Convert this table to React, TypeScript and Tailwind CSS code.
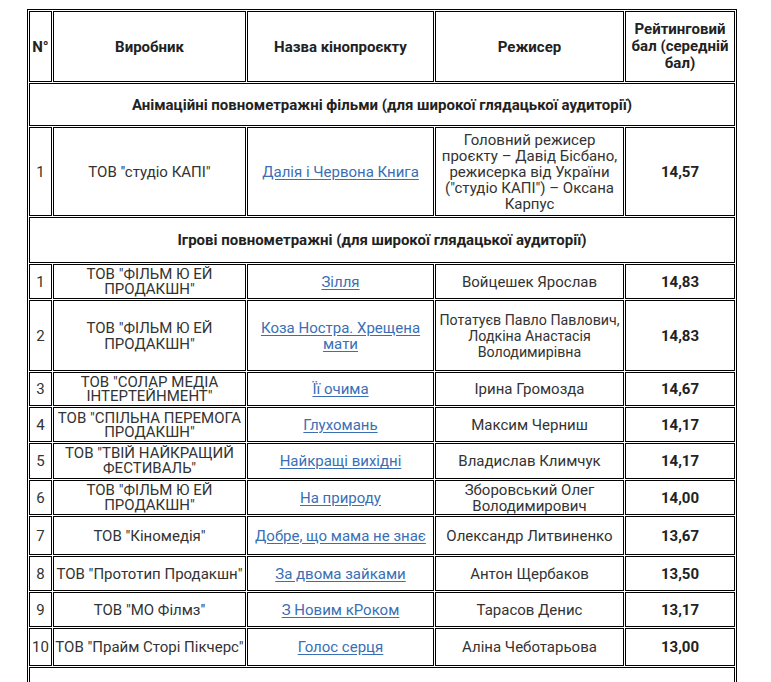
import React from 'react';

type Row = {
  n: string;
  producer: string;
  title: string;
  director: string;
  score: string;
  h: string;
  lead?: string;
  dirCls?: string;
};

const animation: Row[] = [
  {
    n: '1',
    producer: 'ТОВ "студіо КАПІ"',
    title: 'Далія і Червона Книга',
    director: 'Головний режисер проєкту – Давід Бісбано, режисерка від України ("студіо КАПІ") – Оксана Карпус',
    score: '14,57',
    h: 'h-[89px]',
  },
];

const feature: Row[] = [
  { n: '1', producer: 'ТОВ "ФІЛЬМ Ю ЕЙ ПРОДАКШН"', title: 'Зілля', director: 'Войцешек Ярослав', score: '14,83', h: 'h-[35px]', lead: 'leading-[15px]' },
  { n: '2', producer: 'ТОВ "ФІЛЬМ Ю ЕЙ ПРОДАКШН"', title: 'Коза Ностра. Хрещена мати', director: 'Потатуєв Павло Павлович, Лодкіна Анастасія Володимирівна', score: '14,83', h: 'h-[71px]', lead: 'leading-[16px]', dirCls: 'text-[14.2px]' },
  { n: '3', producer: 'ТОВ "СОЛАР МЕДІА ІНТЕРТЕЙНМЕНТ"', title: 'Її очима', director: 'Ірина Громозда', score: '14,67', h: 'h-[34px]', lead: 'leading-[14px]' },
  { n: '4', producer: 'ТОВ "СПІЛЬНА ПЕРЕМОГА ПРОДАКШН"', title: 'Глухомань', director: 'Максим Черниш', score: '14,17', h: 'h-[35px]', lead: 'leading-[14px]' },
  { n: '5', producer: 'ТОВ "ТВІЙ НАЙКРАЩИЙ ФЕСТИВАЛЬ"', title: 'Найкращі вихідні', director: 'Владислав Климчук', score: '14,17', h: 'h-[36px]', lead: 'leading-[15px]' },
  { n: '6', producer: 'ТОВ "ФІЛЬМ Ю ЕЙ ПРОДАКШН"', title: 'На природу', director: 'Зборовський Олег Володимирович', score: '14,00', h: 'h-[35px]', lead: 'leading-[15px]' },
  { n: '7', producer: 'ТОВ "Кіномедія"', title: 'Добре, що мама не знає', director: 'Олександр Литвиненко', score: '13,67', h: 'h-[39px]' },
  { n: '8', producer: 'ТОВ "Прототип Продакшн"', title: 'За двома зайками', director: 'Антон Щербаков', score: '13,50', h: 'h-[35px]' },
  { n: '9', producer: 'ТОВ "МО Філмз"', title: 'З Новим кРоком', director: 'Тарасов Денис', score: '13,17', h: 'h-[35px]' },
  { n: '10', producer: 'ТОВ "Прайм Сторі Пікчерс"', title: 'Голос серця', director: 'Аліна Чеботарьова', score: '13,00', h: 'h-[38px]' },
];

const cell = 'border border-black p-0 text-center align-middle';

function DataRow({ row }: { row: Row }) {
  return (
    <tr>
      <td className={`${cell} ${row.h}`}>{row.n}</td>
      <td className={`${cell} ${row.lead ?? 'leading-[16px]'}`}>{row.producer}</td>
      <td className={cell}>
        <a href="#" className="text-[#3a6fb5] underline underline-offset-2">
          {row.title}
        </a>
      </td>
      <td className={`${cell} ${row.dirCls ?? ''}`}>{row.director}</td>
      <td className={`${cell} font-bold text-[#222]`}>{row.score}</td>
    </tr>
  );
}

function SectionRow({ title, h }: { title: string; h: string }) {
  return (
    <tr>
      <td colSpan={5} className={`${cell} ${h} font-bold text-[#222]`}>
        {title}
      </td>
    </tr>
  );
}

export default function App() {
  return (
    <div className="bg-white min-h-screen pt-[9px] pl-[27px] font-['Roboto',sans-serif] text-[15px] leading-[16px] text-[#333]">
      <table className="w-[710px] table-fixed border-separate border-spacing-[1px] border border-black">
        <thead>
          <tr className="text-[#222]">
            <th className={`${cell} w-[23px] h-[71px] font-bold`}>N°</th>
            <th className={`${cell} w-[193px] font-bold`}>Виробник</th>
            <th className={`${cell} w-[187px] font-bold`}>Назва кінопроєкту</th>
            <th className={`${cell} w-[189px] font-bold`}>Режисер</th>
            <th className={`${cell} w-[110px] font-bold leading-[17px]`}>Рейтинговий бал (середній бал)</th>
          </tr>
        </thead>
        <tbody>
          <SectionRow title="Анімаційні повнометражні фільми (для широкої глядацької аудиторії)" h="h-[43px]" />
          {animation.map((r) => (
            <DataRow key={'a' + r.n} row={r} />
          ))}
          <SectionRow title="Ігрові повнометражні (для широкої глядацької аудиторії)" h="h-[46px]" />
          {feature.map((r) => (
            <DataRow key={'f' + r.n} row={r} />
          ))}
          <SectionRow title="Документальні повнометражні фільми" h="h-[90px]" />
        </tbody>
      </table>
    </div>
  );
}
